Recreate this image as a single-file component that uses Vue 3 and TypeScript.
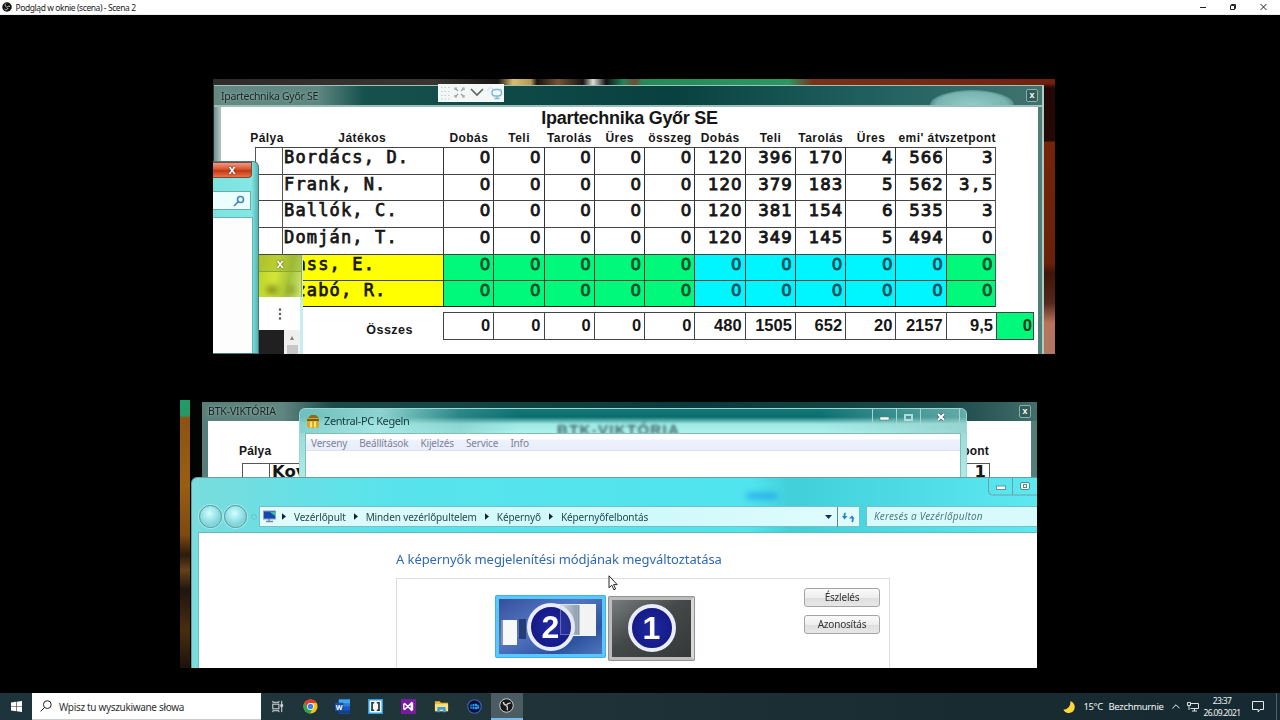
<script setup lang="ts">
interface Player {
  name: string
  values: string[]
  bench?: boolean
}

const headings: string[] = ['Dobás', 'Teli', 'Tarolás', 'Üres', 'összeg', 'Dobás', 'Teli', 'Tarolás', 'Üres', "emi' átv", 'szetpont']
const zeros = (n: number): string[] => Array.from({ length: n }, () => '0')

const players: Player[] = [
  { name: 'Bordács, D.', values: [...zeros(5), '120', '396', '170', '4', '566', '3'] },
  { name: 'Frank, N.', values: [...zeros(5), '120', '379', '183', '5', '562', '3,5'] },
  { name: 'Ballók, C.', values: [...zeros(5), '120', '381', '154', '6', '535', '3'] },
  { name: 'Domján, T.', values: [...zeros(5), '120', '349', '145', '5', '494', '0'] },
  { name: 'Kass, E.', values: zeros(11), bench: true },
  { name: 'Szabó, R.', values: zeros(11), bench: true },
]
const totals: string[] = [...zeros(5), '480', '1505', '652', '20', '2157', '9,5', '0']
const menu: string[] = ['Verseny', 'Beállítások', 'Kijelzés', 'Service', 'Info']
const crumbs: string[] = ['Vezérlőpult', 'Minden vezérlőpultelem', 'Képernyő', 'Képernyőfelbontás']

function tone(p: Player, i: number): string {
  if (!p.bench) return ''
  return i < 5 || i === 10 ? 'green' : 'cyan'
}
</script>

<template>
  <div class="screen">
    <header class="caption">
      <svg class="obs" viewBox="0 0 20 20"><circle cx="10" cy="10" r="9.5" fill="#111" /><g fill="none" stroke="#ddd" stroke-width="1.8"><path d="M8 3a4 4 0 0 0 1 7" /><path d="M16 9a4 4 0 0 0-6 2" /><path d="M5 14a4 4 0 0 0 7-2" /></g></svg>
      <span class="caption-text">Podgląd w oknie (scena) - Scena 2</span>
      <svg class="controls" viewBox="0 0 80 15" fill="none" stroke="#222" stroke-width="1">
        <path d="M0 7.5h6" /><path d="M30.500 5.500h4v4h-4zM31.500 5.500v-1h4v4h-1" /><path d="M60.500 4l6 6m0-6l-6 6" />
      </svg>
    </header>

    <main class="stage">
      <section class="capture first">
        <div class="strip"></div>
        <div class="wall"></div>
        <div class="win score">
          <div class="bar"><span class="bar-text">Ipartechnika Győr SE</span><span class="glow"></span><span class="close-box">x</span></div>
          <div class="sheet">
            <h1>Ipartechnika Győr SE</h1>
            <div class="row heads">
              <span class="h-lane">Pálya</span><span class="h-name">Játékos</span>
              <span v-for="(h, i) in headings" :key="i" class="h" :class="{ cut: i === 9, cutr: i === 10 }"><i>{{ h }}</i></span>
            </div>
            <div class="grid">
              <div v-for="p in players" :key="p.name" class="row line" :class="{ bench: p.bench }">
                <span class="lane"></span><span class="name">{{ p.name }}</span>
                <span v-for="(v, i) in p.values" :key="i" class="cell" :class="tone(p, i)"><template v-for="(c, k) in v" :key="k"><b>{{ c }}</b></template></span>
              </div>
            </div>
            <div class="sum">
              <span class="sum-label">Összes</span>
              <span v-for="(t, i) in totals" :key="i" class="total" :class="{ last: i === 11 }">{{ t }}</span>
            </div>
          </div>
        </div>
        <div class="float-tool">
          <svg viewBox="0 0 66 18" fill="none">
            <rect width="66" height="18" fill="#f3f7f6" />
            <g stroke="#c5cccc" stroke-dasharray="1.500 2"><path d="M3 3.500h9M3 7.500h9M3 11.500h9M3 15h9" /></g>
            <path d="M17 6V4h2m5 0h2v2m0 5v2h-2m-5 0h-2v-2M18 5l2 2m5-2l-2 2m2 5l-2-2m-5 2l2-2" stroke="#9c9f9f" stroke-width="1.200" />
            <path d="M33 5l6 6 6-6" stroke="#606666" stroke-width="1.700" />
            <path d="M50 7c-1-3 4-4 5-2" stroke="#cfdfe5" /><rect x="54" y="5.500" width="9.500" height="6.500" rx="3" stroke="#7eb9d8" stroke-width="1.400" /><path d="M56.500 14.500h5M59 12v2" stroke="#7eb9d8" stroke-width="1.300" />
          </svg>
        </div>
        <div class="explorer">
          <div class="red">x</div>
          <div class="find"><svg viewBox="0 0 12 12" fill="none" stroke="#3c84bd" stroke-width="1.600"><circle cx="7.500" cy="4.500" r="3" /><path d="M5.200 6.800L1 11" /></svg></div>
          <div class="pane"></div>
        </div>
        <div class="popup">
          <div class="popup-glass"><span>x</span><i></i></div>
          <div class="popup-mid"><svg viewBox="0 0 4 12" fill="#555"><circle cx="2" cy="1.500" r="1.200" /><circle cx="2" cy="6" r="1.200" /><circle cx="2" cy="10.500" r="1.200" /></svg></div>
          <div class="popup-low"><i></i><div><span>▴</span><b></b></div></div>
        </div>
      </section>

      <section class="capture second">
        <div class="side"></div>
        <div class="win btk">
          <div class="bar"><span class="bar-text">BTK-VIKTÓRIA</span><span class="close-box">x</span></div>
          <div class="sheet small">
            <div class="small-heads"><span>Pálya</span><span>szetpont</span></div>
            <div class="small-grid"><i></i><span>Kovács</span><b>1</b></div>
          </div>
        </div>
        <div class="zentral">
          <div class="z-title">
            <svg viewBox="0 0 14 15"><rect x="1" y="3" width="12" height="11" rx="3" fill="#d9a528" /><path d="M2 4l3-3h5l3 3z" fill="#8b6a20" /><path d="M1 6h12" stroke="#5d4015" stroke-width="1.500" /><path d="M5 7.500v6M9 7.500v6" stroke="#f9e26d" stroke-width="2.200" /></svg>
            <span>Zentral-PC Kegeln</span>
            <span class="ghost">BTK-VIKTÓRIA</span>
            <svg class="z-ctl" viewBox="0 0 88 16" fill="none"><path d="M.5 0v12q0 3 3 3h81q3 0 3-3V0M24.500 0v15M48.500 0v15" stroke="#a7d5d2" /><rect x="8" y="8" width="9" height="3" fill="#fff" stroke="#527e80" stroke-width=".6" /><rect x="33" y="6" width="7" height="5" stroke="#b2dcda" stroke-width="2" /><path d="M66 5l6 6m0-6l-6 6" stroke="#42686b" stroke-width="3.500" /><path d="M66 5l6 6m0-6l-6 6" stroke="#fff" stroke-width="2" /></svg>
          </div>
          <div class="z-body"><nav><span v-for="m in menu" :key="m">{{ m }}</span></nav></div>
        </div>
        <div class="panel">
          <div class="panel-top">
            <svg viewBox="0 0 52 18" fill="none"><path d="M.5 0v13q0 4 4 4H52M24.500 0v17" stroke="#729fa4" /><rect x="8.500" y="8" width="9" height="3.500" fill="#fff" stroke="#6b9093" /><rect x="32.500" y="4.500" width="9" height="7" rx="1.500" fill="#e7fbfb" stroke="#5d8589" /><rect x="35.500" y="6.500" width="3" height="3" stroke="#5d8589" /></svg>
            <span class="smudge"></span>
          </div>
          <div class="nav-row">
            <i class="orb"></i><i class="orb"></i><i class="tiny"></i>
            <div class="address">
              <svg class="pc" viewBox="0 0 13 13"><rect x=".5" y="1" width="12" height="8" fill="#1747ad" stroke="#87a3bc" /><path d="M7 2h5v4z" fill="#2fc2a5" /><path d="M3 11.500h7M6 9v2" stroke="#789" stroke-width="1.500" /></svg>
              <template v-for="c in crumbs" :key="c"><svg class="arrow" viewBox="0 0 5 8"><path d="M0 0l5 4-5 4z" fill="#123" /></svg><span class="crumb">{{ c }}</span></template>
              <svg class="drop" viewBox="0 0 7 4"><path d="M0 0h7L3.500 4z" fill="#162c68" /></svg>
              <svg class="refresh" viewBox="0 0 22 20" fill="none" stroke="#287fc1"><path d="M.5 0v20" stroke="#61898d" /><path d="M8.500 6q-1.500 1-1 4" stroke-width="1.800" /><path d="M5 9h5.500L7.500 12.500z" fill="#287fc1" stroke="none" /><path d="M15 15q1.500-2 .5-4" stroke-width="1.800" /><path d="M12 11.500h5.500L15 8.500z" fill="#287fc1" stroke="none" /></svg>
            </div>
            <div class="search-cp">Keresés a Vezérlőpulton</div>
          </div>
          <div class="panel-body">
            <h2>A képernyők megjelenítési módjának megváltoztatása</h2>
            <div class="box">
              <div class="mon two">
                <i class="mini-a"></i><i class="mini-b"></i><i class="mini-c"></i><b>2</b><i class="mini-d"></i>
              </div>
              <div class="mon one"><b>1</b></div>
              <div class="buttons"><button>Észlelés</button><button>Azonosítás</button></div>
            </div>
          </div>
        </div>
      </section>
      <svg class="cursor" viewBox="0 0 10 16"><path d="M1 .8v12l2.800-2.600 2 4.600 1.800-.8-2-4.400h3.600z" fill="#fff" stroke="#111" stroke-width=".9" /></svg>
    </main>

    <footer class="taskbar">
      <div class="start"><svg viewBox="0 0 11 11" fill="#fff"><path d="M0 1.500l5-.7v4.500H0zM5.600.7L11 0v5.300H5.600zM0 5.800h5v4.500l-5-.7zM5.600 5.800H11V11l-5.400-.7z" /></svg></div>
      <div class="search">
        <svg viewBox="0 0 12 12" fill="none" stroke="#222" stroke-width="1"><circle cx="7.300" cy="4.600" r="3.900" /><path d="M4.500 7.500L.6 11.400" /></svg>
        <span>Wpisz tu wyszukiwane słowa</span>
      </div>
      <div class="apps">
        <div class="app"><svg viewBox="0 0 16 16" fill="none" stroke="#e4e8e9" stroke-width="1"><rect x="3" y="5.500" width="6.500" height="5" /><path d="M3 2v1.500h6.500V2M3 14v-1.500h6.500V14M12.500 2v12M11.500 6h2v2h-2z" /></svg></div>
        <div class="app"><svg viewBox="0 0 16 16"><circle cx="8" cy="8" r="7.500" fill="#fbc116" /><path d="M1.500 4.300A7.500 7.500 0 0 1 14.500 4.300H8L5 10z" fill="#e33b2e" /><path d="M1.500 4.300A7.500 7.500 0 0 0 7.300 15.500L10.800 9.900 5 9.700z" fill="#2da44e" /><circle cx="8" cy="8" r="3.700" fill="#fff" /><circle cx="8" cy="8" r="2.900" fill="#3b82e8" /></svg></div>
        <div class="app"><svg viewBox="0 0 16 16"><rect x="4" y="0.500" width="12" height="15" rx="1" fill="#2b7cd3" /><path d="M4 .5h12v4H4z" fill="#43a5ee" /><path d="M4 8h12v4H4z" fill="#185abd" /><path d="M4 12h12v3.500H4z" fill="#103f91" /><rect x="0" y="4" width="9" height="9" fill="#174ea6" /><text x="4.500" y="11.200" text-anchor="middle" font-size="7.500" font-weight="bold" fill="#fff">W</text></svg></div>
        <div class="app"><svg viewBox="0 0 16 16"><rect x=".8" y=".8" width="14.400" height="14.400" fill="#f7f9fa" stroke="#22a4e6" stroke-width="1.600" /><path d="M6.600 4H4.300v8h2.300M9.400 4h2.300v8H9.400" fill="none" stroke="#25313a" stroke-width="1.800" /></svg></div>
        <div class="app"><svg viewBox="0 0 16 16"><rect width="16" height="16" fill="#7a1aa0" /><path d="M3 5.500v5l1 .5 7-6.500v7L4 5z" fill="none" stroke="#fff" stroke-width="1.500" /><path d="M10.500 3L13 4v8l-2.500 1z" fill="#fff" /></svg></div>
        <div class="app"><svg viewBox="0 0 16 16"><path d="M1 2.500h5l1.500 1.500H15V13H1z" fill="#efb62f" /><path d="M1 5.500h14V13H1z" fill="#ffe07a" /><path d="M3.500 14V9.500q0-1 1-1h7q1 0 1 1V14h-2.700v-2.500H6.200V14z" fill="#3b9ee2" /></svg></div>
        <div class="app"><svg viewBox="0 0 16 16"><circle cx="8" cy="8" r="7.200" fill="#0b1038" stroke="#485fb9" stroke-width="1.200" /><path d="M3.500 6l4-1v6l-4-1zM8 5h3v1.500l2 .5v3l-2 .5V11H8z" fill="#1c9cf3" /><path d="M5.500 5v6M3.500 8h8" stroke="#0b1038" stroke-width=".7" /></svg></div>
        <div class="app active"><svg viewBox="0 0 16 16"><circle cx="8" cy="8" r="7.200" fill="#171719" stroke="#d8d8d8" stroke-width="1" /><g fill="none" stroke="#d5d5d5" stroke-width="1.500"><path d="M4.500 4.200q1 3.500 3.500 3.600" /><path d="M12.500 5.500q-3.500-.5-4.500 2.300" /><path d="M8.800 13q1-3-.8-5" /></g></svg></div>
      </div>
      <div class="tray">
        <svg class="moon" viewBox="0 0 12 12"><path d="M7.500.3A6 6 0 1 1 .4 8.800Q7.500 8 7.500.3z" fill="#ffd93a" /></svg>
        <span class="temp">15°C</span><span class="weather">Bezchmurnie</span>
        <svg class="chev" viewBox="0 0 8 5" fill="none" stroke="#eee"><path d="M.4 4.400L4 .8l3.600 3.600" /></svg>
        <svg class="net" viewBox="0 0 12 10" fill="none" stroke="#dfe3e4"><path d="M4 1.500h7.500v5H3.500M7.500 6.500v2.500M5 9h5M.5.500h3v3h-3zM2 3.500V8" /></svg>
        <div class="clock"><span>23:37</span><span>26.09.2021</span></div>
        <svg class="note" viewBox="0 0 12 12" fill="none" stroke="#e4e8e9"><path d="M.5.500h11v8H8L6.200 11V8.500H.5z" /></svg>
        <i class="edge"></i>
      </div>
    </footer>
  </div>
</template>

<style>
html, body { background: #000; overflow: hidden; }
</style>

<style scoped>
* { box-sizing: border-box; }
svg { display: block; flex: none; }
.screen { width: 1280px; height: 720px; display: flex; flex-direction: column; background: #000; font-family: "Noto Sans", sans-serif; overflow: hidden; }
.caption { height: 15px; background: #fff; display: flex; align-items: center; padding-left: 2px; border-bottom: 1px solid #ececec; flex: none; }
.obs { width: 10px; height: 10px; }
.caption-text { margin-left: 3.500px; font-size: 8.500px; letter-spacing: -.42px; color: #222; line-height: 14px; white-space: nowrap; padding-top: 1px; }
.controls { width: 80px; height: 15px; margin-left: auto; }
.stage { height: 678px; position: relative; flex: none; display: flex; flex-direction: column; }
.capture { position: relative; overflow: hidden; flex: none; }
.first { width: 842px; height: 275px; margin: 64px 0 0 213px; background: #17332f; }
.second { width: 857px; height: 268px; margin: 46px 0 0 180px; background: #020404; }
.win, .explorer, .popup, .float-tool, .zentral, .panel { filter: blur(.4px); }

.strip { position: absolute; left: 0; top: 0; width: 100%; height: 6px; background: linear-gradient(90deg, #302a28 0, #393632 220px, #171411 285px, #d9be70 300px, #b69854 318px, #17120f 324px, #745435 345px, #181512 370px, #e0dfd6 380px, #111 393px, #20855a 410px, #754b31 422px, #238b59 430px, #2a9861 575px, #7a3219 600px, #73200f 842px); }
.wall { position: absolute; right: 0; top: 4px; width: 12px; height: 271px; background: linear-gradient(#702611 0, #210705 5px, #240905 58px, #742408 59px, #6a2109 180px, #3d1509 190px, #54281b 220px, #b8745a 240px, #ae7864); }
.win { position: absolute; }
.score { left: 1px; top: 6px; width: 830px; height: 275px; padding: 0 4px 0 7px; background: linear-gradient(90deg, #6d908b 0, #b0c1bc 6px, #507d76 100%); border-top: 1px solid #9ec1bc; border-right: 2px solid #b0cac4; }
.bar { position: relative; display: flex; align-items: center; justify-content: space-between; }
.score .bar { height: 21px; margin: 0 -4px 0 -7px; padding: 0 4px 0 7px; background: linear-gradient(90deg, #648983 0, #5d857f 105px, #16514e 150px, #08413f 55%, #20615f 80%, #41736e); border-bottom: 2px solid #9dbfba; }
.bar-text { font-size: 10.500px; color: #16221f; letter-spacing: -.3px; white-space: nowrap; text-shadow: 0 0 3px #a6c3bd; }
.glow { position: absolute; right: 28px; bottom: 0; width: 84px; height: 15px; border-radius: 50% 50% 0 0 / 100% 100% 0 0; background: radial-gradient(ellipse at 50% 100%, #93cbc8, #79b4b1 60%, #4d827d00 82%); }
.close-box { width: 12px; height: 13px; border: 1px solid #8fadaa; border-radius: 2px; background: #345d59; color: #fff; font: bold 9px/10px "Liberation Sans", sans-serif; text-align: center; position: relative; }
.sheet { height: 260px; background: #fff; display: flex; flex-direction: column; font-family: "Liberation Sans", Arial, sans-serif; color: #161616; }
.sheet h1 { margin: 0; height: 22px; font-size: 18px; line-height: 23px; text-align: center; letter-spacing: -.28px; }
.row { display: grid; grid-template-columns: 27px 161.500px repeat(11, 50.270px); margin-left: 33.500px; }
.heads { height: 18px; font-size: 12px; font-weight: bold; line-height: 18px; letter-spacing: .45px; white-space: nowrap; }
.heads > span { text-align: center; display: flex; justify-content: center; overflow: hidden; }
.heads i { font-style: normal; }
.heads .h-lane { overflow: visible; padding-right: 2px; }
.heads .h { padding-left: 1.500px; }
.heads .h.cut { justify-content: flex-start; padding-left: 3px; }
.heads .h.cutr { justify-content: flex-end; padding-left: 0; }
.grid { height: 160px; flex: none; }
.line { height: 26.670px; font-family: "DejaVu Sans", sans-serif; font-size: 16.500px; }
.line > span { border-left: 1px solid #555; border-top: 1px solid #444; line-height: 19px; }
.line > .name { font: 17px/19px "DejaVu Sans Mono", monospace; letter-spacing: 1.150px; padding-left: 1.500px; white-space: pre; -webkit-text-stroke: .75px currentColor; }
.cell { text-align: right; padding-right: 2.500px; white-space: nowrap; border-left-color: #333 !important; }
.cell b { display: inline-block; width: 11.500px; text-align: center; font-weight: normal; -webkit-text-stroke: .9px currentColor; }
.line > span:last-child { border-right: 1px solid #555; padding-right: 2px; }
.line:last-child > span { border-bottom: 1px solid #222; }
.bench .name, .bench .lane { background: #ff0; }
.bench .lane { border-left-color: #ff0; }
.green { background: #00f97b; color: #084f2c; }
.cyan { background: #00f6ff; color: #07505c; }
.sum { display: grid; grid-template-columns: 222px repeat(11, 50.270px) 38px; grid-template-rows: 28px; height: 28px; margin-top: 5px; }
.sum-label { height: 28px; font-size: 12.500px; font-weight: bold; letter-spacing: .5px; text-align: right; padding-right: 30px; line-height: 37px; }
.total { border: 1px solid #444; border-right: 0; text-align: right; font-size: 16.500px; font-weight: bold; line-height: 24px; padding-right: 3px; }
.total.last { background: #00f97b; border-right: 1px solid #444; padding-right: 1px; color: #06351d; }

.float-tool { position: absolute; left: 225px; top: 5px; width: 66px; height: 18px; }
.float-tool svg { width: 66px; height: 18px; }
.explorer { position: absolute; left: 0; top: 82px; width: 46px; height: 193px; background: linear-gradient(90deg, #7de3df, #83e8e5 85%, #5ab3b0); border: 1px solid #497b7b; border-left: 0; border-radius: 0 6px 0 0; display: flex; flex-direction: column; }
.red { width: 39px; height: 16px; background: linear-gradient(#ef9b83, #d9532d 45%, #c33814 55%, #ea7445); border: 1px solid #84463b; border-left: 0; border-radius: 0 0 4px 0; color: #fff; font: bold 13px/13px "Liberation Sans", sans-serif; text-align: center; text-shadow: 0 0 2px #333; flex: none; }
.find { width: 38px; height: 19px; margin-top: 13px; background: #ecffff; border: 1px solid #69aaaa; border-left: 0; display: flex; align-items: center; justify-content: flex-end; padding-right: 5px; flex: none; }
.find svg { width: 12px; height: 12px; }
.pane { margin-top: 7px; width: 40px; flex: 1; background: #fdfdfd; border: 1px solid #62b5b8; border-left: 0; border-bottom: 0; }
.popup { position: absolute; left: 46px; top: 176px; width: 44px; height: 99px; border-right: 3px solid #c7eeee; display: flex; flex-direction: column; }
.popup-glass { position: relative; height: 42px; margin-right: -2px; background: linear-gradient(100deg, #b9d327, #d4e538 40%, #a7c437 70%, #cfe57c); border-right: 1px solid #95ad43; flex: none; overflow: hidden; }
.popup-glass span { display: block; height: 17px; border-bottom: 1px solid #8fa82f; background: #8da62a55; color: #fff; font: bold 13px/17px "Liberation Sans", sans-serif; text-align: center; text-shadow: 0 0 2px #333; }
.popup-glass i { position: absolute; left: 8px; top: 31px; width: 28px; height: 8px; background: linear-gradient(90deg, #58650c 0 8px, transparent 12px 18px, #7c8b1c 22px); filter: blur(3px); opacity: .7; }
.popup-mid { height: 33px; background: #fff; display: flex; align-items: center; justify-content: center; flex: none; }
.popup-mid svg { width: 4px; height: 12px; }
.popup-low { flex: 1; display: flex; background: #efefef; }
.popup-low > i { width: 25px; background: #202020; }
.popup-low div { flex: 1; display: flex; flex-direction: column; align-items: center; font: 8px/15px "DejaVu Sans", sans-serif; color: #8c7d73; }
.popup-low b { width: 11px; flex: 1; background: #c7c7c7; }

.side { position: absolute; left: 0; top: 0; width: 10px; height: 268px; background: linear-gradient(#1f9b68 0, #27996a 15px, #8b5314 18px, #9a5d14 85px, #7e4910 135px, #2b1a0c 155px, #664018 170px, #1f150e 190px, #4a2d10 230px, #1b120b); }
.btk { left: 22px; top: 2px; width: 835px; height: 80px; padding: 0 6px; background: #547e79; }
.btk .bar { height: 19px; margin: 0 -6px; padding: 0 6px; background: linear-gradient(90deg, #5a7f79 0, #618681 80px, #184b49 130px, #053c3b 60%, #1d4a4b 90%, #426f6a); }
.btk .bar-text { font-size: 10.500px; letter-spacing: -.15px; line-height: 16px; margin-top: -2px; }
.small { height: 61px; overflow: hidden; }
.small-heads { display: flex; justify-content: space-between; height: 42px; padding: 22px 42px 0 31px; font-weight: bold; font-size: 12px; line-height: 16px; letter-spacing: .2px; flex: none; }
.small-grid { margin: 0 41px 0 34px; height: 30px; border: 1px solid #555; display: flex; flex: none; }
.small-grid i { width: 27px; border-right: 1px solid #555; }
.small-grid span, .small-grid b { font: bold 16.500px/16px "DejaVu Sans", sans-serif; padding-left: 2px; }
.small-grid b { margin-left: auto; padding-right: 3px; }

.zentral { position: absolute; left: 119px; top: 8px; width: 668px; height: 80px; border: 1px solid #a1d5d1; border-radius: 6px 6px 0 0; background: linear-gradient(#8fd5d0, #b2eeea); padding: 0 5px; }
.z-title { position: relative; height: 24px; margin: 0 -5px; padding: 0 0 0 6px; display: flex; align-items: center; border-radius: 5px 5px 0 0; background: linear-gradient(90deg, #7fcdcad9 0, #a4e5e2d9 80px, #61b0ac55 160px, #11717100 220px, #11717100 78%, #8fc9c5aa), linear-gradient(#117777 0, #0b6e6e 8px, #9ee8e3 15px, #aff2ed); }
.z-title > svg:first-child { width: 14px; height: 15px; }
.z-title > span { font-size: 11px; letter-spacing: -.4px; margin-left: 4px; margin-top: -1px; color: #173b3d; white-space: nowrap; }
.z-title > .ghost { position: absolute; left: 253px; top: 14px; font: bold 15px/16px "Liberation Sans", sans-serif; letter-spacing: 1.300px; filter: blur(1.400px); color: #2a5252; opacity: .85; }
.z-ctl { width: 88px; height: 16px; margin-left: auto; margin-right: 6px; align-self: flex-start; }
.z-body { position: relative; background: #fff; height: 60px; border: 1px solid #82bdba; }
.z-body nav { display: flex; height: 17px; align-items: center; background: linear-gradient(#fff 0, #fff 5px, #edf2fd 6px, #e7eef9); border-bottom: 1px solid #e5dfee; padding: 1px 0 0 5px; gap: 12.200px; font-size: 10px; letter-spacing: -.17px; color: #827f99; }

.panel { position: absolute; left: 11px; top: 77px; width: 850px; height: 200px; border: 1px solid #649fa2; border-radius: 6px 0 0 0; background: linear-gradient(90deg, #7adcdd, #58e3ec 200px, #4fe4ee 560px, #41cfda 600px, #5de9f2); padding: 0 0 0 6px; }
.panel-top { position: relative; height: 28px; display: flex; justify-content: flex-end; }
.panel-top svg { width: 52px; height: 18px; }
.smudge { position: absolute; left: 548px; top: 15px; width: 32px; height: 6px; border-radius: 4px; background: #1f9eea; filter: blur(3px); opacity: .8; }
.nav-row { height: 21px; display: flex; align-items: center; }
.orb { width: 23px; height: 23px; border-radius: 50%; margin: 0 1px; border: 1px solid #5e979a; background: radial-gradient(circle at 45% 35%, #d0ffff, #7cd4db 65%, #b4f6f7); box-shadow: 0 0 0 1px #a5e9eb; flex: none; }
.tiny { width: 6px; height: 6px; border-radius: 50%; border: 1px solid #67c7cb; margin: 0 2px 0 3px; flex: none; }
.address { width: 601px; height: 21px; display: flex; align-items: center; border: 1px solid #78bec2; background: linear-gradient(90deg, #e2fbfb, #cdf9fb 60%, #e0fcfd); flex: none; padding-left: 3px; }
.pc { width: 13px; height: 13px; margin-right: 6px; }
.arrow { width: 4px; height: 7px; margin-right: 8px; }
.crumb { font-size: 10px; color: #23494e; letter-spacing: -.12px; white-space: nowrap; margin-right: 8px; }
.drop { width: 7px; height: 4px; margin-left: auto; margin-right: 5px; }
.refresh { width: 22px; height: 20px; }
.search-cp { height: 21px; width: 190px; margin-left: 6px; border: 1px solid #78bec2; background: #d7fbfc; color: #517c80; font-size: 10px; font-style: italic; line-height: 19px; padding-left: 7px; letter-spacing: .18px; flex: none; }
.panel-body { margin-top: 5px; height: 150px; background: #fff; border-left: 1px solid #6bbfc4; border-top: 1px solid #68b7bc; padding-left: 197px; }
.panel-body h2 { margin: 16px 0 0; font-weight: normal; font-size: 13px; line-height: 20px; height: 29px; letter-spacing: -.08px; color: #2f69b5; white-space: nowrap; }
.box { width: 494px; height: 110px; border: 1px solid #dcdfe2; display: flex; align-items: flex-start; padding-left: 98px; }
.mon { position: relative; display: flex; align-items: center; justify-content: center; }
.mon b { position: relative; width: 48px; height: 48px; border-radius: 50%; border: 4px solid #e9ecfb; background: radial-gradient(circle, #2029a0, #10147c); color: #fff; font: bold 32px/40px "Liberation Sans", sans-serif; text-align: center; flex: none; }
.two { width: 111px; height: 63px; margin-top: 16px; border: 4px solid #58c8fb; outline: 1px solid #45b0e8; outline-offset: -1px; background: linear-gradient(150deg, #34509d, #5476c0 40%, #2e549f 75%, #4e76bd); border-radius: 2px; }
.one { width: 87px; height: 65px; margin: 17px 0 0 2px; border: 4px solid #bcbcbc; border-right-color: #d8d8d8; outline: 1px solid #929292; outline-offset: -1px; background: linear-gradient(145deg, #797c7c, #454848 45%, #353838); border-radius: 2px; }
.one b { left: 0; top: -1px; }
.mini-a { position: absolute; left: 2px; top: 21px; width: 16px; height: 25px; background: #f7f8fa; border-left: 2px solid #8793a8; }
.mini-b { position: absolute; left: 20px; top: 20px; width: 7px; height: 20px; background: #253c76; }
.mini-c { position: absolute; right: 6px; top: 5px; width: 38px; height: 32px; background: linear-gradient(90deg, #d9dee1 0, #8395a4 20px, #f2f4f3 21px); border: 1px solid #f4f4f4; }
.mini-d { position: absolute; left: 61px; top: 5px; width: 18px; height: 31px; background: #b8c7e218; border: 1px solid #bec8e966; }
.two b { left: 0; top: 0; }
.buttons { margin: 9px 9px 0 auto; display: flex; flex-direction: column; gap: 8px; }
button { width: 76px; height: 19px; border: 1px solid #a4a4a4; border-radius: 3px; background: linear-gradient(#fafafa, #eee 50%, #dedede 52%, #e7e7e7); font: 10px/15px "Noto Sans", sans-serif; letter-spacing: -.2px; padding: 0; color: #333; }
.cursor { position: absolute; left: 608px; top: 560px; width: 10px; height: 16px; }

.taskbar { height: 27px; flex: none; background: linear-gradient(90deg, #1d343c, #20353a 35%, #182b30 75%, #162a33); display: flex; }
.start { width: 32px; display: flex; align-items: center; justify-content: center; }
.start svg { width: 11px; height: 11px; }
.search { width: 229px; background: #fff; display: flex; align-items: center; padding-left: 8px; border-bottom: 1px solid #ccc; }
.search svg { width: 12px; height: 12px; }
.search span { margin-left: 7px; font-size: 10px; color: #303030; letter-spacing: -.33px; white-space: nowrap; padding-top: 1px; }
.apps { display: flex; }
.app { width: 32.800px; display: flex; align-items: center; justify-content: center; }
.app svg { width: 15px; height: 15px; }
.active { background: #4b5d62; border-bottom: 2px solid #76b9ed; }
.tray { margin-left: auto; display: flex; align-items: center; color: #f3f3f3; font-size: 9.500px; white-space: nowrap; }
.moon { width: 12px; height: 12px; margin-right: 8px; }
.temp { letter-spacing: -.4px; width: 25px; padding-left: .5px; }
.weather { letter-spacing: -.33px; width: 64px; padding-left: .5px; }
.chev { width: 8px; height: 5px; margin-right: 7px; }
.net { width: 12px; height: 10px; }
.clock { width: 46px; display: flex; flex-direction: column; align-items: center; font-size: 8.500px; line-height: 12px; letter-spacing: -.65px; }
.note { width: 12px; height: 12px; margin-left: 7px; }
.edge { width: 1px; height: 27px; background: #526066; margin: 0 3px 0 12px; }
</style>
